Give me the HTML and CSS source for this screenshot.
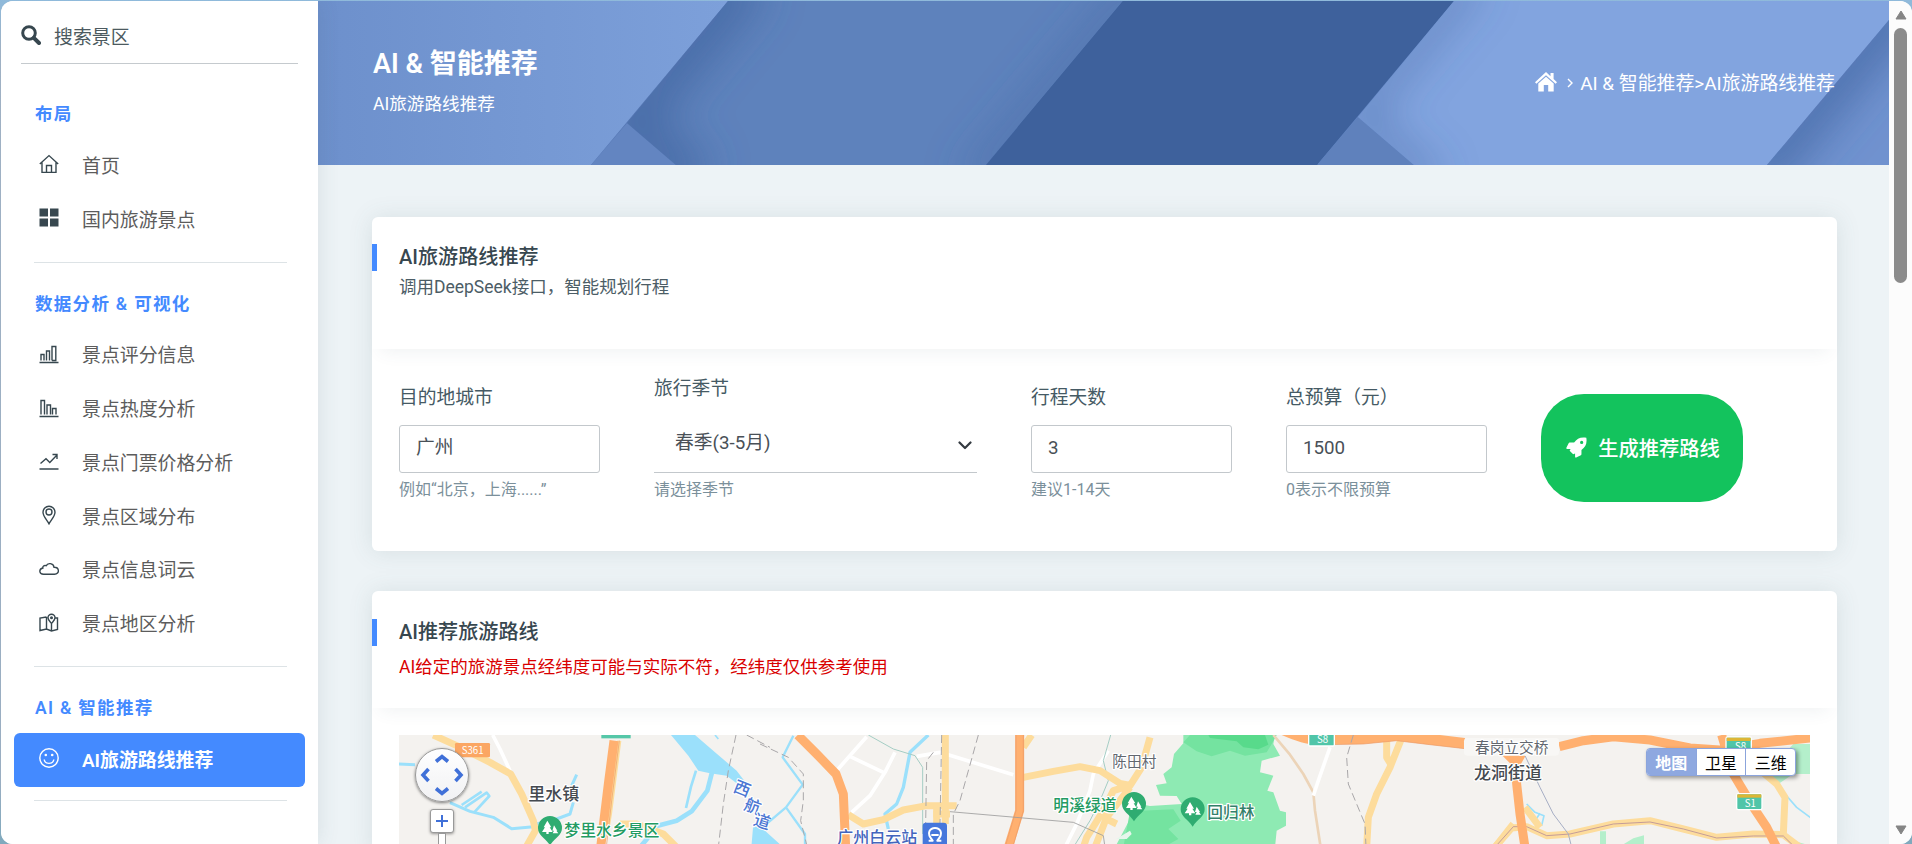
FILE: index.html
```html
<!DOCTYPE html>
<html lang="zh-CN">
  <head>
    <meta charset="UTF-8" />
    <meta name="viewport" content="width=device-width, initial-scale=1.0" />
    <title>AI旅游路线推荐</title>
    <link rel="stylesheet" href="styles.css">
  </head>
  <body>
    <div class="window">
      <nav class="sidebar">
        <div class="search">
          <svg class="search-icon" viewBox="0 0 20 20"><circle cx="8" cy="8" r="6.3" fill="none" stroke="#37474f" stroke-width="3" /><path d="M12.8 12.8L18 18" stroke="#37474f" stroke-width="4" stroke-linecap="round" /></svg>
          <span>搜索景区</span>
        </div>

        <div class="menu">
          <div class="menu-caption">布局</div>
          <a class="menu-item">
            <svg class="menu-icon" viewBox="0 0 20 20"><path d="M.8 10L10 1.6 19.200 10M3 8.500V18.400H17V8.500M7.500 18V11.500H12.500V18" /></svg>
            <span>首页</span>
          </a>
          <a class="menu-item">
            <svg class="menu-icon solid" viewBox="0 0 20 20"><path d="M.5 .5H9V8.500H.5zM11 .5H19.500V8.500H11zM.5 10.500H9V18.500H.5zM11 10.500H19.500V18.500H11z" /></svg>
            <span>国内旅游景点</span>
          </a>
          <hr class="menu-divider" />

          <div class="menu-caption">数据分析 &amp; 可视化</div>
          <a class="menu-item">
            <svg class="menu-icon" viewBox="0 0 20 20"><path d="M.5 18.500H19.500M2 16.500V10.500H5V16.500M7.500 16.500V7H10.500V16.500M13 16.500V2.500H16.800V16.500H13" /></svg>
            <span>景点评分信息</span>
          </a>
          <a class="menu-item">
            <svg class="menu-icon" viewBox="0 0 20 20"><path d="M.5 18.500H19.500M2 16.500V2.500H5.500V16.500M8 16.500V7H11.500V16.500M13.500 16.500V10.500H17V16.500" /></svg>
            <span>景点热度分析</span>
          </a>
          <a class="menu-item">
            <svg class="menu-icon" viewBox="0 0 20 20"><path d="M.5 18H19.500M1.500 12.500L7 7.800 10.800 11.500 18 4M13.500 3.500H18V8" /></svg>
            <span>景点门票价格分析</span>
          </a>
          <a class="menu-item">
            <svg class="menu-icon" viewBox="0 0 20 20"><path d="M10 18.800C7.500 14.500 4 11 4 7.200A6 6 0 0 1 16 7.200C16 11 12.500 14.500 10 18.800z" /><circle cx="10" cy="7" r="3" /></svg>
            <span>景点区域分布</span>
          </a>
          <a class="menu-item">
            <svg class="menu-icon" viewBox="0 0 20 20"><path d="M4.500 15.300H15.500C21 15 20.500 8 15 8.200C14.500 4 8.500 3.500 7.300 6.700C5 5.800 3.400 7.500 3.900 9C-.6 10 .1 15.300 4.500 15.300z" /></svg>
            <span>景点信息词云</span>
          </a>
          <a class="menu-item">
            <svg class="menu-icon" viewBox="0 0 20 20"><path d="M7.500 4L1 5V17.500L7.500 16 12.500 18 18.500 16.500V5H16M7.500 4V16M12.500 11V18M12.500 10.500C11 8.500 9 7 9 4.800A3.500 3.500 0 0 1 16 4.800C16 7 14 8.500 12.500 10.500z" /><circle cx="12.500" cy="4.700" r=".8" /></svg>
            <span>景点地区分析</span>
          </a>
          <hr class="menu-divider" />

          <div class="menu-caption">AI &amp; 智能推荐</div>
          <a class="menu-item active">
            <svg class="menu-icon" viewBox="0 0 20 20"><circle cx="10" cy="10" r="9.200" /><path d="M5.200 11.500C6 16.700 14 16.700 14.800 11.500" /><circle class="eye" cx="6.800" cy="7" r="1.300" /><circle class="eye" cx="13.200" cy="7" r="1.300" /></svg>
            <span>AI旅游路线推荐</span>
          </a>
          <hr class="menu-divider last" />
        </div>
      </nav>

      <main class="main">
        <header class="banner">
          <svg class="banner-bg" viewBox="0 0 1571 164" preserveAspectRatio="none">
            <defs>
              <linearGradient id="left" x1="0" x2="1"><stop offset="0" stop-color="#6d90cc" /><stop offset="1" stop-color="#7da0da" /></linearGradient>
              <filter id="soft" x="-100%" y="-50%" width="300%" height="200%"><feGaussianBlur stdDeviation="20" /></filter>
              <clipPath id="mid"><path d="M410 0H805L668 164H358L309 122z" /></clipPath>
              <clipPath id="light"><path d="M1136 0H1571V19L1449 164H1096L1040 116z" /></clipPath>
              <clipPath id="end"><path d="M1571 19V164H1449z" /></clipPath>
            </defs>
            <!-- base tones under the folded shapes -->
            <rect width="700" height="164" fill="#5577b4" />
            <rect x="700" width="300" height="164" fill="#3e619c" />
            <rect x="1000" width="571" height="164" fill="#6285c2" />
            <path d="M0 0H410L273 164H0z" fill="url(#left)" />
            <path d="M273 164L309 122 358 164z" fill="#6385c1" />
            <g clip-path="url(#mid)">
              <rect x="273" width="540" height="164" fill="#5e82bc" />
              <path d="M430 -24L309 122 378 182" class="fold" />
              <path d="M825 -24L653 182" class="fold thin" />
            </g>
            <path d="M805 0H1136L999 164H668z" fill="#3e619c" />
            <path d="M999 164L1040 116 1096 164z" fill="#5f81bc" />
            <g clip-path="url(#light)">
              <rect x="999" width="572" height="164" fill="#82a4df" />
              <path d="M1156 -24L1040 116 1116 182" class="fold thin" />
            </g>
            <g clip-path="url(#end)">
              <rect x="1440" width="131" height="164" fill="#7092cf" />
              <path d="M1591 -5L1434 182" class="fold" />
            </g>
          </svg>
          <div class="banner-heading">
            <h1>AI &amp; 智能推荐</h1>
            <p>AI旅游路线推荐</p>
          </div>
          <div class="breadcrumb">
            <svg class="home-icon" viewBox="0 0 22 20"><path fill="#fff" d="M11 0L0 10.200 1.400 11.700 11 3.200 20.600 11.700 22 10.200 18.600 7V1H15.500V4.200zM11 4.800L3.300 11.600V19.500H8.800V13H13.200V19.500H18.700V11.600z" /></svg>
            <svg class="crumb-sep" viewBox="0 0 6 10"><path d="M1 1L5 5 1 9" fill="none" stroke="#fff" stroke-width="1.400" /></svg>
            <span>AI &amp; 智能推荐&gt;AI旅游路线推荐</span>
          </div>
        </header>

        <div class="content">
          <section class="card">
            <div class="card-header">
              <h2>AI旅游路线推荐</h2>
              <p>调用DeepSeek接口，智能规划行程</p>
            </div>
            <form class="route-form">
              <div class="field">
                <label>目的地城市</label>
                <div class="input">广州</div>
                <small>例如“北京，上海......”</small>
              </div>
              <div class="field wide">
                <label>旅行季节</label>
                <div class="select">
                  <span>春季(3-5月)</span>
                  <svg class="chevron" viewBox="0 0 14 9"><path d="M1.500 1.500L7 7 12.500 1.500" fill="none" stroke="#343a40" stroke-width="2.200" stroke-linecap="round" stroke-linejoin="round" /></svg>
                </div>
                <small>请选择季节</small>
              </div>
              <div class="field">
                <label>行程天数</label>
                <div class="input">3</div>
                <small>建议1-14天</small>
              </div>
              <div class="field">
                <label>总预算（元）</label>
                <div class="input">1500</div>
                <small>0表示不限预算</small>
              </div>
              <button class="submit" type="button">
                <svg class="rocket" viewBox="0 0 22 22"><path fill="#fff" fill-rule="evenodd" d="M21.300 .7C15 -.3 11.500 1.700 8.500 5.800H4.500C3.400 5.800 2.900 6.300 2.500 7.100L.4 11.300C.1 12 .5 12.500 1.200 12.500H4.800L3.800 14.500 7.500 18.200 9.500 17.200V20.800C9.500 21.500 10 21.900 10.700 21.600L15 19.500C15.800 19.100 16.200 18.500 16.200 17.500V13.500C20.300 10.500 22.300 7 21.300 .7zM16.400 4A1.700 1.700 0 1 1 16.400 7.400 1.700 1.700 0 0 1 16.400 4z" /></svg>
                生成推荐路线
              </button>
            </form>
          </section>

          <section class="card">
            <div class="card-header compact">
              <h2>AI推荐旅游路线</h2>
              <p class="warning">AI给定的旅游景点经纬度可能与实际不符，经纬度仅供参考使用</p>
            </div>
            <div class="map">
              <svg class="map-canvas" viewBox="0 0 1411 120">
                <defs>
                  <g id="pin">
                    <path d="M-36 0A36 36 0 0 1 36 0C36 22 14 30 0 52C-14 30 -36 22 -36 0z" fill="#2fac71" />
                    <path d="M-8 -22L4 -2H-1L8 12H-4V18H-11V12H-24L-15 -2H-19zM12 -8L22 8H19L25 16H8L12 8H7z" fill="#fff" />
                  </g>
                </defs>

                <!-- west -->
                <g transform="translate(-9 -11) scale(.33333)">
                  <g class="water">
                    <path class="fill" d="M843 33H915L975 85 1040 140 1078 190 1050 185 1010 155 960 148 925 140 895 95zM1084 370L1090 300 1125 320 1180 370z" />
                    <path d="M27 120L75 122M180 236L240 262 310 280 365 314 430 308" stroke-width="9" />
                    <path d="M225 250L290 206 298 216 252 266M215 243L275 203" stroke-width="8" />
                    <path d="M430 302L500 285 540 270 550 235M545 185L560 152" stroke-width="9" />
                    <path d="M918 140L903 188 888 252" stroke-width="8" />
                    <path d="M966 145L952 200 905 262 860 290 800 306M775 340L750 370" stroke-width="14" />
                    <path d="M975 33L985 45" stroke-width="5" />
                  </g>
                  <path class="minor" d="M308 33L330 75 360 140" />
                  <g class="local"><path d="M130 33L200 65 300 115 362 150 395 210 430 290 436 320 408 370M690 300H740L820 330 860 370" /></g>
                  <path class="local narrow" d="M688 50L660 270 650 330" />
                  <path class="major" d="M672 50L655 180 632 370" />
                  <path class="edge" d="M688 50L665 230 650 360" />
                  <path class="rail" d="M1038 33L1015 140 1000 240 985 370M1070 33L1140 70" />
                  <rect x="634" y="33" width="88" height="10" fill="#55c7a8" />
                  <rect x="195" y="57" width="105" height="43" rx="4" fill="#fba663" />
                  <text x="248" y="89" class="shield">S361</text>
                  <text x="415" y="228" class="town">里水镇</text>
                  <use href="#pin" x="480" y="312" />
                  <text x="523" y="337" class="park">梦里水乡景区</text>
                  <g class="river-name">
                    <text transform="translate(1057 194) rotate(22)" y="18">西</text>
                    <text transform="translate(1089 247) rotate(20)" y="18">航</text>
                    <text transform="translate(1117 292) rotate(18)" y="18">道</text>
                  </g>
                </g>

                <!-- railway station -->
                <g transform="translate(361 -11) scale(.33333)">
                  <g class="water">
                    <path d="M100 35L68 100 128 182 78 250 25 295M78 250L135 330V370" stroke-width="7" />
                    <path d="M505 33L450 85 430 190 410 240 375 270 385 315" stroke-width="10" />
                  </g>
                  <path class="minor" d="M320 38L230 140M265 95L370 145M405 85L375 145 330 215 275 265M470 97L540 85 760 152M1045 80L1000 150 990 200 950 300 915 370" />
                  <path class="trail" d="M325 33L400 75 465 95 488 130V330M1052 33L1030 110 1045 170 1020 230 990 290 940 370" />
                  <g class="local">
                    <path d="M556 33V300M265 272L310 300 370 287 430 258 500 245H590M520 270H570M815 33L790 70M790 160L880 142 960 128 1020 140 1080 178 1115 185M1170 40L1145 130 1110 185 1060 200 1030 260 980 340 970 370M1110 190L1040 280 1005 370M1030 280L1070 300" />
                    <path d="M530 240V300" />
                  </g>
                  <path class="major" d="M113 33L170 90 228 150 250 210 257 370M779 33V260L745 370" />
                  <path class="edge" d="M768 33V260L735 370M790 33V260L758 370" />
                  <path class="rail" d="M0 60L85 100 130 150V230L122 290 142 370M545 33L540 300M655 33L600 230 580 270V370M520 85L500 110 497 300" />
                  <path d="M570 263L940 295 1030 335 1035 370" fill="none" stroke="#9c9c9c" stroke-width="2.500" />
                  <text x="1057" y="128" class="village">陈田村</text>
                  <text x="232" y="358" class="station">广州白云站</text>
                  <rect x="488" y="296" width="73" height="80" rx="10" fill="#4677dc" />
                  <path d="M506 350H518C496 325 512 312 525 312S554 325 532 350H544" fill="none" stroke="#fff" stroke-width="6" />
                  <path d="M514 333H536" stroke="#fff" stroke-width="6" />
                </g>

                <!-- forest park -->
                <g transform="translate(731 -11) scale(.33333)">
                  <path fill="#8eeab3" d="M160 33V58L132 90 125 130 100 150 110 178 78 183 90 215 140 216 155 240 60 246 30 240 -8 300 -45 370H435L440 320 468 305V265L450 260 430 205 412 200 430 155 390 145 395 110 450 95 430 60 435 33z" />
                  <path fill="#74e3a0" d="M180 33L160 55 200 82 245 97 300 80 345 95 410 85 425 60 440 33zM0 262L130 256 152 290 115 315 145 345 100 370H-20z" />
                  <path fill="#58da8b" d="M235 33L240 42 320 52 340 70 385 76 415 62 405 33z" />
                  <path d="M-42 345L0 320 5 330 -10 345z" fill="#e6f6ec" />
                  <path class="tan" d="M430 33L480 92 520 150 550 205 555 260 572 370" />
                  <path class="minor" d="M600 70L565 170 550 215" />
                  <path class="local" d="M812 50L780 130 740 210 715 280 710 370M770 50V100L785 125M1150 300L1095 370" />
                  <path fill="#ffb070" d="M455 33C500 52 530 62 560 62L700 60 800 50 900 62 1005 74V42L930 33z" />
                  <path class="edge" d="M600 62L700 60 800 50 900 62 1005 74" />
                  <path class="rail" d="M670 33L650 100 655 180 680 240 705 300 708 370" />
                  <rect x="536" y="26" width="77" height="40" rx="4" fill="#50c5a8" stroke="#fff" stroke-width="4" />
                  <text x="578" y="56" class="shield">S8</text>
                  <use href="#pin" x="188" y="256" />
                  <use href="#pin" x="12" y="240" />
                  <text x="-230" y="262" class="park">明溪绿道</text>
                  <text x="232" y="281" class="wood">回归林</text>
                </g>

                <!-- east -->
                <g transform="translate(1101 -11) scale(.33333)">
                  <path fill="#b4efcb" d="M880 60H932V150H880L835 180 800 150zM300 322H318V370H300zM355 370L400 343 432 334V370zM880 350L932 365V370H860z" />
                  <g class="water">
                    <path d="M855 210L890 250 932 281M80 240L105 265 132 275 125 305M105 290L120 268" stroke-width="5" />
                  </g>
                  <path class="local" d="M-20 375L35 312 80 308 140 335 210 330 340 300 450 290 550 315 650 340 760 330 850 332 900 370M770 130L830 180 855 220 850 330M75 250L120 310" />
                  <path d="M-20 375L40 308 80 308 140 335 210 330 340 300 450 294 550 315 650 342 760 336 850 336 885 370" fill="none" stroke="#b88f98" stroke-width="2.500" />
                  <path class="major" d="M178 68L250 50 340 38 450 48 570 72 660 78 780 58 932 42M665 33L700 150 760 250 800 310 830 370M45 90L50 180 60 270 75 370" />
                  <path fill="#ffb070" d="M0 88H75V98L60 125 30 118z" />
                  <path class="trail dark" d="M75 95L120 190 160 270 205 330 215 370" />
                  <rect x="-108" y="42" width="285" height="53" rx="10" fill="#f8f7f5" />
                  <text x="-75" y="86" class="village">春岗立交桥</text>
                  <text x="-78" y="166" class="town">龙洞街道</text>
                  <g transform="translate(678 39)">
                    <rect width="76" height="46" rx="5" fill="#50c5a8" stroke="#fff" stroke-width="4" /><rect x="2" y="2" width="72" height="10" fill="#ddb635" />
                    <text x="44" y="38" class="shield">S8</text>
                  </g>
                  <g transform="translate(710 209)">
                    <rect width="76" height="48" rx="5" fill="#50c5a8" stroke="#fff" stroke-width="4" /><rect x="2" y="2" width="72" height="10" fill="#ddb635" />
                    <text x="41" y="39" class="shield">S1</text>
                  </g>
                </g>
              </svg>

              <div class="map-nav">
                <svg class="pan" viewBox="0 0 52 52"><path d="M20 12.500L26 7.500 32 12.500M20 39.500L26 44.500 32 39.500M12.500 20L7 26 12.500 32M39.500 20L45 26 39.500 32" fill="none" stroke="#4070d8" stroke-width="3.600" /></svg>
                <div class="zoom-in"></div>
                <div class="zoom-track"></div>
              </div>
              <div class="map-types">
                <div class="map-type active">地图</div>
                <div class="map-type">卫星</div>
                <div class="map-type">三维</div>
              </div>
            </div>
          </section>
        </div>
      </main>

      <div class="scrollbar">
        <svg class="arrow" viewBox="0 0 12 10"><path d="M6 1L11 9H1z" fill="#858585" stroke="#858585" stroke-linejoin="round" /></svg>
        <div class="thumb"></div>
        <svg class="arrow down" viewBox="0 0 12 10"><path d="M6 9L11 1H1z" fill="#858585" stroke="#858585" stroke-linejoin="round" /></svg>
      </div>
    </div>
  </body>
</html>
```
FILE: styles.css
```css
* {
  box-sizing: border-box;
}

body {
  margin: 0;
  height: 844px;
  overflow: hidden;
  padding: 1px 0 0 1px;
  background: linear-gradient(180deg, #8fbadb 0, #9fb1c4 50px, #9aaec2 780px, #7fa9bd 844px);
  font-family: Roboto, "Noto Sans CJK SC", sans-serif;
  font-size: 17.5px;
  color: #37474f;
}

h1,
h2,
p {
  margin: 0;
}

.window {
  display: flex;
  height: 843px;
  border-radius: 12px;
  overflow: hidden;
  background: #fff;
}

/* sidebar */
.sidebar {
  width: 317px;
  flex: none;
  background: #fff;
  position: relative;
  z-index: 1;
  box-shadow: 1px 0 20px rgba(69, 90, 100, 0.12);
}

.search {
  display: flex;
  align-items: center;
  gap: 13px;
  height: 63px;
  margin: 0 20px;
  padding-top: 6px;
  border-bottom: 1px solid #c5cace;
  font-size: 18.9px;
  color: #4c5a60;
}

.search-icon {
  width: 20px;
  height: 20px;
}

.search span {
  padding-top: 1px;
}

.menu {
  padding: 24px 13px 0;
}

.menu-caption {
  height: 51px;
  padding-left: 21px;
  line-height: 52px;
  font-weight: 600;
  letter-spacing: 1.3px;
  color: #448aff;
}

.menu-item {
  display: flex;
  align-items: center;
  gap: 24px;
  height: 53.75px;
  padding-left: 25px;
  padding-bottom: 3px;
  border-radius: 6px;
  font-size: 18.9px;
  color: #5c5c5c;
}

.menu-item span {
  margin-left: -1px;
}

.menu-icon {
  width: 20px;
  height: 20px;
  fill: none;
  stroke: #37474f;
  stroke-width: 1.4;
}

.menu-icon.solid {
  fill: #37474f;
  stroke: none;
}

.menu-item.active {
  background: #448aff;
  color: #fff;
  font-weight: 600;
}

.menu-item.active .menu-icon {
  stroke: #fff;
}

.menu-icon .eye {
  fill: #fff;
  stroke: none;
}

.menu-divider {
  height: 1px;
  margin: 15px 18px 15px 20px;
  border: 0;
  background: #dde3e6;
}

.menu-divider.last {
  margin-top: 13px;
}

/* page */
.main {
  flex: 1;
  min-width: 0;
  background: #edf3f6;
}

.banner {
  position: relative;
  display: flex;
  align-items: center;
  justify-content: space-between;
  height: 164px;
  padding: 0 54px 0 55px;
  overflow: hidden;
  color: #fff;
}

.banner-bg {
  position: absolute;
  left: 0;
  top: 0;
  width: 100%;
  height: 100%;
}

.fold {
  fill: none;
  stroke: #3d619d;
  stroke-opacity: 0.6;
  stroke-width: 50;
  filter: url(#soft);
}

.fold.thin {
  stroke-opacity: 0.45;
  stroke-width: 26;
}

.banner-heading {
  position: relative;
}

.banner-heading h1 {
  margin-bottom: 7px;
  font-size: 27px;
  line-height: 34px;
  font-weight: 600;
}

.banner-heading p {
  font-size: 17.6px;
  line-height: 32px;
}

.breadcrumb {
  position: relative;
  display: flex;
  align-items: center;
  padding-bottom: 3px;
  font-size: 18.9px;
}

.home-icon {
  width: 22px;
  height: 20px;
  margin-right: 10px;
}

.crumb-sep {
  width: 6px;
  height: 10px;
  margin: 2px 7px 0 0;
}

.content {
  display: flex;
  flex-direction: column;
  gap: 40px;
  padding: 52px 52px 0 54px;
}

.card {
  background: #fff;
  border-radius: 6px;
  box-shadow: 0 1px 25px rgba(69, 100, 100, 0.13);
}

.card-header {
  height: 132px;
  padding: 27px 27px 0 0;
  box-shadow: 0 12px 16px -9px rgba(69, 90, 100, 0.08);
}

.card-header.compact {
  height: 117px;
  padding-top: 28px;
}

.card-header h2 {
  padding-left: 22px;
  border-left: 5px solid #448aff;
  font-size: 20.1px;
  line-height: 27px;
  font-weight: 500;
}

.card-header p {
  padding-left: 27px;
  line-height: 33px;
  color: #4c5d66;
}

.card-header p.warning {
  padding-top: 5px;
  color: #d90000;
}

.route-form {
  display: flex;
  gap: 54px;
  height: 202px;
  padding: 34px 27px 0;
}

.field {
  display: flex;
  flex-direction: column;
  justify-content: flex-end;
  flex: none;
  width: 201px;
  height: 120px;
}

.field.wide {
  width: 323px;
}

.field label {
  flex: none;
  height: 42px;
  line-height: 30px;
  font-size: 18.75px;
  color: #455a64;
}

.input {
  flex: none;
  height: 48px;
  padding: 0 16px;
  border: 1px solid #c3c8cc;
  border-radius: 3px;
  font-size: 18.75px;
  line-height: 45px;
  color: #495057;
}

.select {
  display: flex;
  flex: none;
  justify-content: space-between;
  height: 57px;
  padding: 11px 5px 0 21px;
  border-bottom: 1px solid #c3c8cc;
  font-size: 18.75px;
  line-height: 32px;
  color: #495057;
}

.chevron {
  width: 14px;
  height: 9px;
  margin-top: 14px;
}

.field small {
  flex: none;
  height: 30px;
  line-height: 34px;
  font-size: 16px;
  color: #7b909b;
}

.submit {
  display: flex;
  align-items: center;
  justify-content: center;
  gap: 11px;
  width: 202px;
  height: 108px;
  margin-top: 11px;
  padding: 0 0 2px 2px;
  border: 0;
  border-radius: 43px;
  background: #13c35d;
  color: #fff;
  font: 500 20.3px Roboto, "Noto Sans CJK SC", sans-serif;
}

.rocket {
  width: 21px;
  height: 21px;
}

/* map */
.map {
  position: relative;
  height: 120px;
  margin: 27px 27px 0;
  overflow: hidden;
  background: #f4f2ef;
}

.map-canvas {
  display: block;
  width: 1411px;
  height: 120px;
  font-family: "Noto Sans CJK SC", sans-serif;
  font-weight: 500;
  stroke-linejoin: round;
}

.map-canvas text {
  paint-order: stroke;
  stroke: #fff;
  stroke-width: 7px;
}

.water {
  fill: none;
  stroke: #9be0fb;
}

.water .fill {
  fill: #9be0fb;
  stroke: none;
}

.local {
  fill: none;
  stroke: #fddc9c;
  stroke-width: 21;
}

.local.narrow {
  stroke-width: 12;
}

.major {
  fill: none;
  stroke: #ffb070;
  stroke-width: 27;
}

.minor {
  fill: none;
  stroke: #fff;
  stroke-width: 11;
}

.edge {
  fill: none;
  stroke: #eb9a66;
  stroke-width: 2;
}

.tan {
  fill: none;
  stroke: #ecd4b8;
  stroke-width: 8;
}

.trail {
  fill: none;
  stroke: #a4cdc4;
  stroke-width: 3;
}

.trail.dark {
  stroke: #a6aec4;
}

.rail {
  fill: none;
  stroke: #a9a7a9;
  stroke-width: 3;
  stroke-dasharray: 24 12;
}

.map-canvas .shield {
  font-size: 29px;
  font-weight: 400;
  text-anchor: middle;
  fill: #fff;
  stroke: none;
}

.town {
  font-size: 51px;
  fill: #454a50;
}

.village {
  font-size: 44px;
  font-weight: 400;
  fill: #62676f;
}

.park {
  font-size: 47.500px;
  fill: #239b62;
}

.wood {
  font-size: 47px;
  fill: #33806a;
}

.station {
  font-size: 48px;
  fill: #4365bd;
}

.river-name {
  font-size: 50px;
  text-anchor: middle;
  fill: #4c77d3;
}

.map-nav {
  position: absolute;
  left: 16px;
  top: 13px;
  display: flex;
  flex-direction: column;
  align-items: center;
}

.pan {
  width: 54px;
  height: 54px;
  border: 1px solid #999;
  border-radius: 50%;
  background: linear-gradient(#fff, #f1f1f3);
  box-shadow: 0 1px 3px rgba(0, 0, 0, 0.5);
}

.zoom-in {
  width: 24px;
  height: 24px;
  margin-top: 7px;
  border: 1px solid #999;
  border-radius: 3px;
  background:
    linear-gradient(#4070d8, #4070d8) center / 12px 2px no-repeat,
    linear-gradient(#4070d8, #4070d8) center / 2px 12px no-repeat,
    #fff;
  box-shadow: 0 1px 3px rgba(0, 0, 0, 0.4);
}

.zoom-track {
  width: 8px;
  height: 30px;
  border: 1px solid #999;
  background: #fff;
}

.map-types {
  position: absolute;
  right: 14px;
  top: 13px;
  display: flex;
  width: 150px;
  height: 28px;
  border: 1px solid #8ba4dc;
  border-radius: 4px;
  overflow: hidden;
  background: #fff;
  box-shadow: 2px 2px 4px rgba(0, 0, 0, 0.4);
}

.map-type {
  flex: 1;
  border-left: 1px solid #8ba4dc;
  font-family: "Noto Sans CJK SC", sans-serif;
  font-size: 16px;
  line-height: 26px;
  text-align: center;
  color: #000;
}

.map-type.active {
  border-left: 0;
  background: #8ea8e0;
  color: #fff;
  font-weight: 700;
}

/* scrollbar */
.scrollbar {
  display: flex;
  flex-direction: column;
  align-items: center;
  flex: none;
  width: 23px;
  padding: 9px 0;
  background: #fcfcfc;
}

.arrow {
  width: 12px;
  height: 10px;
}

.thumb {
  width: 13px;
  height: 255px;
  margin-top: 8px;
  border-radius: 7px;
  background: #8b8b8b;
}

.arrow.down {
  margin-top: auto;
}
```
